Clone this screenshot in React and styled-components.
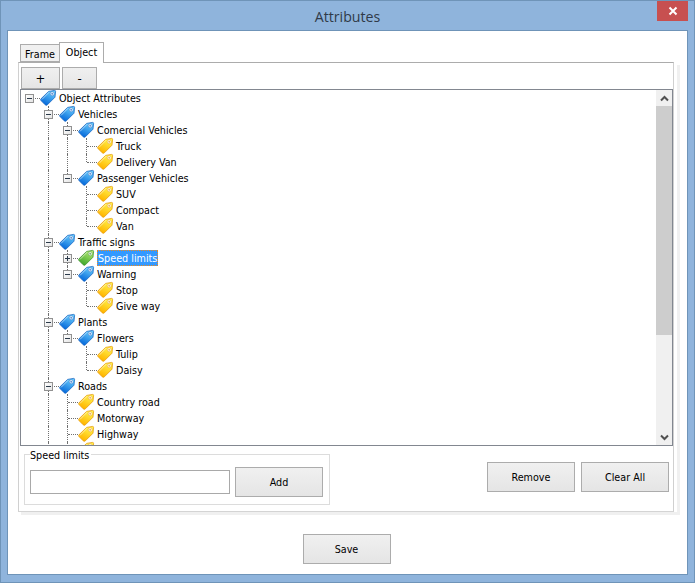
import React from 'react';
import styled, { createGlobalStyle } from 'styled-components';

const Global = createGlobalStyle`
  html, body { margin: 0; padding: 0; background: #8fb4dc; }
  body { font-family: "DejaVu Sans Condensed", "Liberation Sans", sans-serif; font-size: 10.7px; color: #000; }
  * { box-sizing: border-box; }
`;

const Frame = styled.div`
  width: 695px; height: 583px; background: #8fb4dc; border: 1px solid #6f94b8;
  display: flex; flex-direction: column; padding: 0 6px 7px 6px; overflow: hidden;
`;
const TitleBar = styled.div`
  height: 29px; flex: none; display: flex; align-items: center; justify-content: center; position: relative;
  font-size: 14.2px; color: #303a48; font-family: "Open Sans", "Liberation Sans", sans-serif; padding-top: 1px;
`;
const CloseButton = styled.div`
  position: absolute; top: 0; right: 0; width: 31px; height: 20px; background: #c75050;
  display: flex; align-items: center; justify-content: center;
`;
const Client = styled.div`
  flex: 1; background: #fff; border: 1px solid #6f94b8; padding: 11px 10px 0 10px; display: flex; flex-direction: column;
`;
const TabStrip = styled.div`
  display: flex; align-items: flex-end; height: 20px; padding-left: 2px; position: relative; z-index: 1;
`;
const Tab = styled.div`
  height: ${p => p.$active ? 21 : 18}px;
  width: ${p => p.$active ? 45 : 40}px;
  margin-left: ${p => p.$active ? -1 : 0}px;
  margin-bottom: ${p => p.$active ? -1 : 0}px;
  background: ${p => p.$active ? '#fff' : '#f0f0f0'};
  border: 1px solid #acacac; border-bottom: ${p => p.$active ? 'none' : '1px solid #acacac'};
  display: flex; align-items: center; justify-content: center;
  padding-bottom: ${p => p.$active ? 1 : 0}px;
  padding-top: ${p => p.$active ? 0 : 2}px;
`;
const PanelWrap = styled.div`
  width: 659px; padding: 0 3px 3px 0;
  box-shadow: 3px 3px 0 0 #f0f0f0;
  height: 450px;
`;
const Panel = styled.div`
  width: 656px; height: 450px; background: #fff;
  border: 1px solid #acacac; border-bottom-color: #d4d4d4; border-left-color: #d0d0d0; border-right-color: #d0d0d0;
  padding: 4px 1px 0 1px; display: flex; flex-direction: column;
`;
const ToolBar = styled.div`
  display: flex; gap: 2px; padding-left: 1px; height: 22px; flex: none;
`;
const Btn = styled.button`
  font: inherit; color: #000; padding: 0; margin: 0;
  width: ${p => p.$w}px; height: ${p => p.$h}px; flex: none;
  background: linear-gradient(#f0f0f0, #e5e5e5);
  border: 1px solid #acacac;
  font-size: ${p => p.$big ? 13 : 10.7}px;
  font-family: "DejaVu Sans Condensed", "Liberation Sans", sans-serif;
`;
const TreeBox = styled.div`
  width: 653px; height: 357px; margin-top: 0; flex: none; border: 1px solid #828790; background: #fff;
  display: flex; overflow: hidden;
`;
const TreeList = styled.div`
  flex: 1; min-width: 0; display: flex; flex-direction: column; overflow: hidden; height: 355px;
`;
const Row = styled.div`
  height: 16px; flex: none; display: flex; align-items: stretch;
`;
const Cell = styled.div`
  width: 19px; height: 16px; flex: none; position: relative;
  &::before {
    content: ''; position: absolute; left: 8px; width: 0; border-left: 1px dotted #707070;
    display: ${p => (p.$up || p.$down) ? 'block' : 'none'};
    top: ${p => p.$up ? 0 : 8}px;
    bottom: ${p => p.$down ? 0 : 8}px;
  }
  &::after {
    content: ''; position: absolute; left: 9px; right: 0; top: 8px; height: 0; border-top: 1px dotted #707070;
    display: ${p => p.$across ? 'block' : 'none'};
  }
`;
const Toggle = styled.div`
  position: absolute; left: 4px; top: 4px; width: 9px; height: 9px; z-index: 1;
  border: 1px solid #919191; background: linear-gradient(135deg, #fff, #e4e4e4);
  &::before { content: ''; position: absolute; left: 1px; top: 3px; width: 5px; height: 1px; background: #2b3a4a; }
  &::after {
    content: ''; position: absolute; left: 3px; top: 1px; width: 1px; height: 5px; background: #2b3a4a;
    display: ${p => p.$plus ? 'block' : 'none'};
  }
`;
const Icon = styled.svg`
  width: 16px; height: 16px; flex: none; display: block; overflow: visible;
`;
const Label = styled.span`
  margin-left: 3px;
  height: 16px; line-height: ${p => p.$selected ? 15 : 17}px; padding: 0; white-space: nowrap;
  background: ${p => p.$selected ? '#3399ff' : 'transparent'};
  color: ${p => p.$selected ? '#fff' : '#000'};
  border: ${p => p.$selected ? '1px dotted #f08a1d' : 'none'};
`;
const Scrollbar = styled.div`
  width: 16px; flex: none; background: #f0f0f0; display: flex; flex-direction: column;
`;
const ScrollArrow = styled.div`
  height: 16px; flex: none; display: flex; align-items: center; justify-content: center;
`;
const Thumb = styled.div`
  height: 229px; flex: none; background: #cdcdcd;
`;
const ScrollTrack = styled.div`
  flex: 1;
`;
const BottomRow = styled.div`
  display: flex; align-items: flex-start; justify-content: space-between; padding: 0 0 0 4px; flex: 1;
`;
const Group = styled.fieldset`
  margin: 0; width: 306px; height: 59px; border: 1px solid #dcdcdc; padding: 0 0 0 5px; display: flex; align-items: flex-start; gap: 5px;
  position: relative;
`;
const Legend = styled.legend`
  padding: 4px 2px 0 0; margin-left: 0; line-height: 12px; font-size: 10.7px;
`;
const Field = styled.input`
  width: 200px; height: 24px; border: 1px solid #a9a9a9; background: #fff; margin: 8px 0 0 0; padding: 0; display: block;
`;
const AddBtn = styled(Btn)`margin-top: 5px;`;
const RightButtons = styled.div`
  display: flex; gap: 6px; padding: 16px 3px 0 0;
`;
const Footer = styled.div`
  display: flex; justify-content: center; padding-top: 22px; padding-right: 2px;
`;

const palette = {
  blue: ['#63c6fa', '#0a6edc', '#0c5bbd'],
  yellow: ['#fff04a', '#ffb600', '#e59300'],
  green: ['#a8e36c', '#46ab2e', '#348a22'],
};

const TagIcon = ({ color }) => {
  const [a, b, c] = palette[color];
  const id = `tag-${color}`;
  return (
    <Icon viewBox="0 0 16 16">
      <defs>
        <linearGradient id={id} x1="0.7" y1="0.1" x2="0.3" y2="0.9">
          <stop offset="0" stopColor={a} />
          <stop offset="1" stopColor={b} />
        </linearGradient>
      </defs>
      <path d="M8.6 1.4 L14.4 0.4 Q15.7 0.3 15.6 1.6 L15 7.2 L7.4 14.8 Q6.3 15.9 5.2 14.8 L1 10.6 Q0.1 9.6 1 8.8 Z" fill={`url(#${id})`} stroke={c} strokeWidth="0.7" strokeLinejoin="round" />
      <path d="M9 2.3 L1.9 9.5" stroke="#fff" strokeOpacity="0.55" strokeWidth="1" fill="none" />
      <circle cx="12.2" cy="3.8" r="2" fill="#fff" stroke={c} strokeWidth="0.4" />
      <path d="M11.2 3.8 H13.2 M12.2 2.8 V4.8" stroke={c} strokeWidth="0.6" />
    </Icon>
  );
};

const rows = [
  ['r', 'blue', 'Object Attributes'],
  ['.m', 'blue', 'Vehicles'],
  ['.|m', 'blue', 'Comercial Vehicles'],
  ['.||t', 'yellow', 'Truck'],
  ['.||l', 'yellow', 'Delivery Van'],
  ['.|e', 'blue', 'Passenger Vehicles'],
  ['.|.t', 'yellow', 'SUV'],
  ['.|.t', 'yellow', 'Compact'],
  ['.|.l', 'yellow', 'Van'],
  ['.m', 'blue', 'Traffic signs'],
  ['.|p', 'green', 'Speed limits', true],
  ['.|e', 'blue', 'Warning'],
  ['.|.t', 'yellow', 'Stop'],
  ['.|.l', 'yellow', 'Give way'],
  ['.m', 'blue', 'Plants'],
  ['.|e', 'blue', 'Flowers'],
  ['.|.t', 'yellow', 'Tulip'],
  ['.|.l', 'yellow', 'Daisy'],
  ['.m', 'blue', 'Roads'],
  ['.|t', 'yellow', 'Country road'],
  ['.|t', 'yellow', 'Motorway'],
  ['.|t', 'yellow', 'Highway'],
  ['.|t', 'yellow', ''],
];

const cellProps = {
  '.': {},
  '|': { $up: true, $down: true },
  t: { $up: true, $down: true, $across: true },
  l: { $up: true, $across: true },
  m: { $up: true, $down: true, $across: true },
  e: { $up: true, $across: true },
  r: { $across: true },
  p: { $up: true, $down: true, $across: true },
};

const GuideCell = ({ kind }) => (
  <Cell {...cellProps[kind]}>
    {'mer'.includes(kind) && <Toggle />}
    {kind === 'p' && <Toggle $plus />}
  </Cell>
);

const Chevron = ({ up }) => (
  <svg width="9" height="7" viewBox="0 0 9 7">
    <path d={up ? 'M1 5.5 L4.5 2 L8 5.5' : 'M1 1.5 L4.5 5 L8 1.5'} stroke="#505050" strokeWidth="2" fill="none" />
  </svg>
);

export default function App() {
  return (
    <>
      <Global />
      <Frame>
        <TitleBar>
          Attributes
          <CloseButton>
            <svg width="10" height="10" viewBox="0 0 10 10">
              <path d="M1.5 1.5 L8.5 8.5 M8.5 1.5 L1.5 8.5" stroke="#fff" strokeWidth="2" />
            </svg>
          </CloseButton>
        </TitleBar>
        <Client>
          <TabStrip>
            <Tab>Frame</Tab>
            <Tab $active>Object</Tab>
          </TabStrip>
          <PanelWrap>
            <Panel>
              <ToolBar>
                <Btn $w={39} $h={22} $big>+</Btn>
                <Btn $w={35} $h={22} $big>-</Btn>
              </ToolBar>
              <TreeBox>
                <TreeList>
                  {rows.map(([guide, color, text, selected], i) => (
                    <Row key={i}>
                      {guide.split('').map((k, j) => <GuideCell key={j} kind={k} />)}
                      <TagIcon color={color} />
                      <Label $selected={selected}>{text}</Label>
                    </Row>
                  ))}
                </TreeList>
                <Scrollbar>
                  <ScrollArrow><Chevron up /></ScrollArrow>
                  <Thumb />
                  <ScrollTrack />
                  <ScrollArrow><Chevron /></ScrollArrow>
                </Scrollbar>
              </TreeBox>
              <BottomRow>
                <Group>
                  <Legend>Speed limits</Legend>
                  <Field />
                  <AddBtn $w={88} $h={30}>Add</AddBtn>
                </Group>
                <RightButtons>
                  <Btn $w={88} $h={30}>Remove</Btn>
                  <Btn $w={88} $h={30}>Clear All</Btn>
                </RightButtons>
              </BottomRow>
            </Panel>
          </PanelWrap>
          <Footer>
            <Btn $w={88} $h={30}>Save</Btn>
          </Footer>
        </Client>
      </Frame>
    </>
  );
}
